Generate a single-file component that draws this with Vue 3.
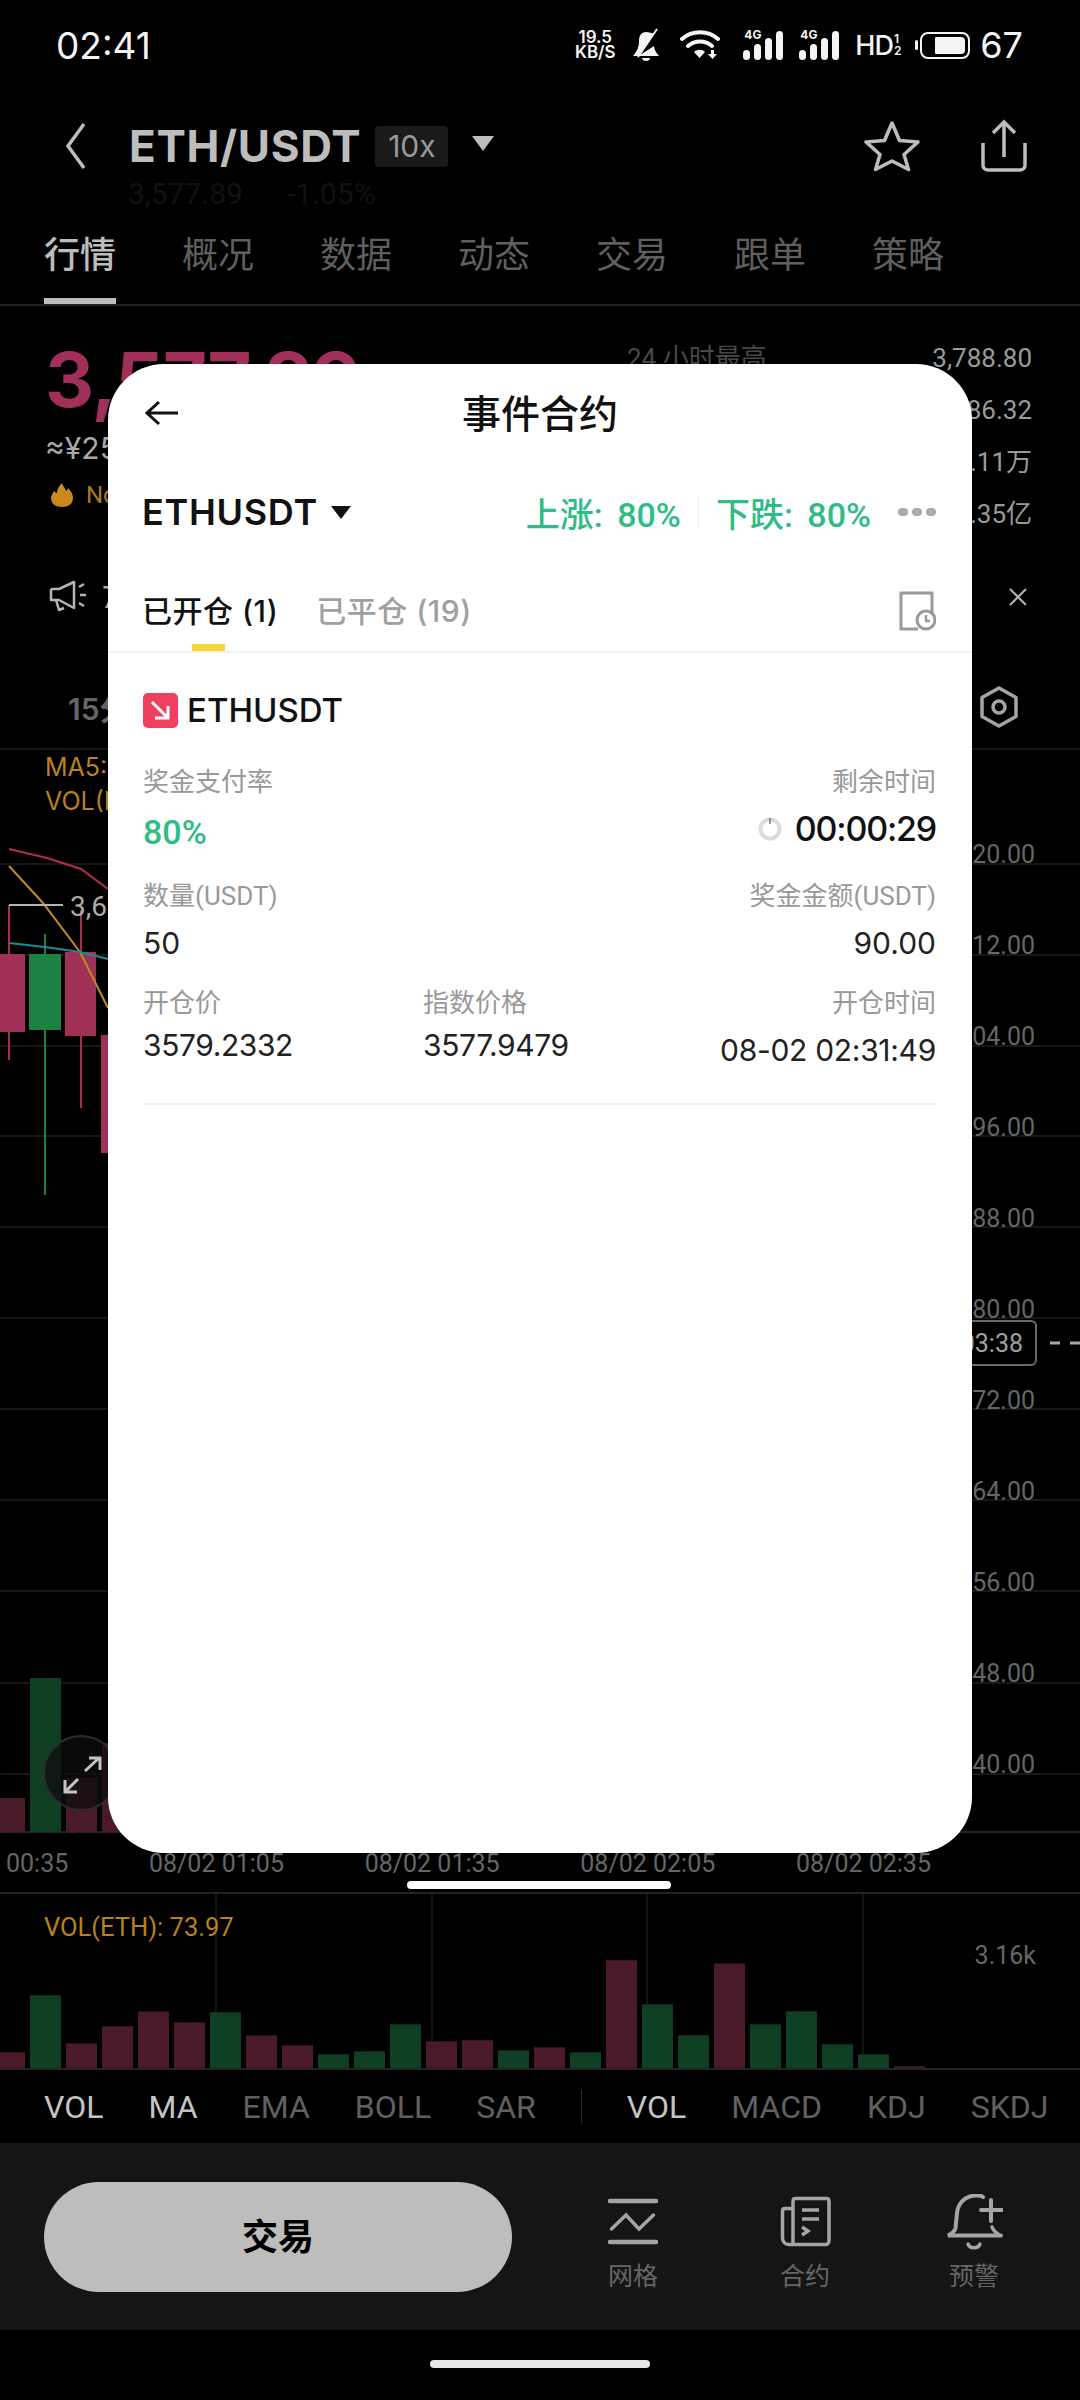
<template>
  <div class="page">
    <div class="status">
      <span class="clock">02:41</span>
      <div class="status-right">
        <div class="speed"><span>19.5</span><span>KB/S</span></div>
        <svg class="st-bell" viewBox="0 0 28 34" width="28" height="34">
          <path d="M14 4c-5 0-7 4-7 9 0 5-1 9-6 15h26c-3-3-5-7-5-10L8 27 22 6c-2-1-5-2-8-2z" fill="#f4f4f4" />
          <path d="M10 30h8c0 2-2 3-4 3s-4-1-4-3z" fill="#f4f4f4" />
          <path d="M6 29 25 1" stroke="#f4f4f4" stroke-width="2" />
        </svg>
        <svg class="st-wifi" viewBox="0 0 40 30" width="40" height="30">
          <path d="M2 9c10-9 26-9 36 0M8 16c7-6 17-6 24 0" fill="none" stroke="#f4f4f4" stroke-width="4" stroke-linecap="round" />
          <path d="M14 22c3-3 8-3 11 0l-5.500 6z" fill="#f4f4f4" />
          <path d="M31 20h3v4h3l-4.500 5-4.500-5h3z" fill="#f4f4f4" />
        </svg>
        <div v-for="n in 2" :key="n" class="signal">
          <span class="tag-4g">4G</span>
          <i class="sb sb1"></i><i class="sb sb2"></i><i class="sb sb3"></i><i class="sb sb4"></i>
        </div>
        <div class="hd"><span class="hd-main">HD</span><span class="hd-sub"><b>1</b><b>2</b></span></div>
        <div class="battery"><i class="bat-tip"></i><div class="bat-body"><i class="bat-fill"></i></div></div>
        <span class="bat-num">67</span>
      </div>
    </div>

    <div class="header">
      <svg class="back" viewBox="0 0 24 48" width="24" height="48">
        <path d="M20 2 4 24l16 22" fill="none" stroke="#bdbdbd" stroke-width="3.500" />
      </svg>
      <span class="pair">ETH/USDT</span>
      <span class="lev">10x</span>
      <i class="caret"></i>
      <div class="header-icons">
        <svg viewBox="0 0 56 52" width="56" height="52">
          <path d="M28 3l7.500 17.500 18.500 1.500-14 12.500 4.500 15L28 41 11.500 49.500l4.500-15L2 22l18.500-1.500z" fill="none" stroke="#bdbdbd" stroke-width="3.500" stroke-linejoin="round" />
        </svg>
        <svg viewBox="0 0 48 54" width="48" height="54">
          <path d="M3 24v22c0 3 2 5 5 5h32c3 0 5-2 5-5V24M24 38V4M13 14 24 3l11 11" fill="none" stroke="#bdbdbd" stroke-width="3.500" />
        </svg>
      </div>
    </div>

    <div class="sub-price"><span>3,577.89</span><span>-1.05%</span></div>

    <div class="tabs">
      <span v-for="(t, i) in mainTabs" :key="t" :class="['tab', { on: i === 0 }]">{{ t }}</span>
    </div>

    <div class="ticker">
      <div class="ticker-left">
        <div class="big-price">3,577.89</div>
        <div class="cny">≈¥25,719.24</div>
        <div class="rank">
          <svg viewBox="0 0 22 26" width="22" height="26">
            <path d="M11 1c1 4 3 4 4 8 1-1 2-2 2-3 3 3 5 6 5 10 0 6-5 9-11 9S0 22 0 16c0-3 2-5 3-7 1 1 2 2 3 2 0-4 2-7 5-10z" fill="#c98a1b" />
          </svg>
          <span>No.1</span>
        </div>
      </div>
      <div class="ticker-right">
        <div v-for="s in stats" :key="s.k" class="stat"><span>{{ s.k }}</span><b>{{ s.v }}</b></div>
      </div>
    </div>

    <div class="notice">
      <svg viewBox="0 0 38 34" width="38" height="34">
        <path d="M2 9h8L25 2v26L10 20l-3 0 3 10 5-2M2 9v11h8" fill="none" stroke="#b5b5b5" stroke-width="2.500" stroke-linejoin="round" />
        <path d="M30 7l5-3M31 15h6M30 23l5 3" stroke="#b5b5b5" stroke-width="2.500" />
      </svg>
      <span class="notice-text">7</span>
      <svg class="notice-x" viewBox="0 0 20 20" width="20" height="20">
        <path d="M2 2l16 16M18 2 2 18" stroke="#b5b5b5" stroke-width="2" />
      </svg>
    </div>

    <div class="periods">
      <span>15分</span>
      <svg viewBox="0 0 38 42" width="38" height="42">
        <path d="M19 2 36 11.500v19L19 40 2 30.500v-19z" fill="none" stroke="#a5a5a5" stroke-width="3.500" stroke-linejoin="round" />
        <circle cx="19" cy="21" r="6" fill="none" stroke="#a5a5a5" stroke-width="3.500" />
      </svg>
    </div>

    <div class="chart">
      <div class="ma-legend">
        <div>MA5: 3,592.11</div>
        <div>VOL(ETH): 73.97</div>
      </div>
      <svg class="chart-svg" viewBox="0 0 1080 1144" width="1080" height="1144">
        <line v-for="y in gridY" :key="y" x1="0" x2="1080" :y1="y" :y2="y" stroke="#171717" stroke-width="2" />
        <line x1="0" x2="1080" y1="1082" y2="1082" stroke="#242424" stroke-width="2" />
        <line x1="0" x2="1080" y1="1143" y2="1143" stroke="#242424" stroke-width="2" />

        <rect v-for="b in mainBars" :key="b.x" :x="b.x" :y="b.y" width="31" :height="1082 - b.y" :fill="b.c" />

        <line x1="9" x2="9" y1="155" y2="310" stroke="#a03055" stroke-width="2" />
        <line x1="45" x2="45" y1="184" y2="445" stroke="#1f8043" stroke-width="2" />
        <line x1="81" x2="81" y1="160" y2="358" stroke="#a03055" stroke-width="2" />
        <rect x="-6" y="204" width="31" height="78" fill="#a03055" />
        <rect x="29" y="204" width="32" height="76" fill="#1f8043" />
        <rect x="65" y="202" width="31" height="84" fill="#a03055" />
        <rect x="101" y="285" width="31" height="118" fill="#a03055" />

        <polyline points="9,99 47,108 81,119 108,139" fill="none" stroke="#b02a62" stroke-width="2" />
        <polyline points="9,116 43,153 80,202 108,258" fill="none" stroke="#c08a25" stroke-width="2" />
        <polyline points="9,193 45,197 80,202 108,209" fill="none" stroke="#1d8a96" stroke-width="2" />
        <line x1="9" x2="63" y1="155" y2="155" stroke="#b5b5b5" stroke-width="2" />
        <text x="70" y="166" class="hi-label">3,612.48</text>

        <text v-for="a in axis" :key="a.t" x="1035" :y="a.y" text-anchor="end" class="axis">{{ a.t }}</text>

        <path d="M1030 593h5M1050 593h10M1070 593h10" stroke="#a8a8a8" stroke-width="3" />
        <rect x="900" y="571" width="136" height="44" rx="5" fill="#000" stroke="#6a6a6a" stroke-width="2" />
        <text x="1023" y="602" text-anchor="end" class="tag">03:38</text>

        <circle cx="81" cy="1023" r="37" fill="#0d0d0d" fill-opacity="0.75" stroke="#2c2c2c" stroke-width="2" />
        <path d="M85 1021l14-13M89 1008h11v12M65 1042l13-13M65 1030v12h12" fill="none" stroke="#c4c4c4" stroke-width="3" />
      </svg>
      <div class="time-axis">
        <span v-for="t in times" :key="t">{{ t }}</span>
      </div>
    </div>

    <div class="vol">
      <div class="vol-legend">VOL(ETH): 73.97</div>
      <div class="vol-max">3.16k</div>
      <svg viewBox="0 0 1080 176" width="1080" height="176">
        <line v-for="x in [216, 432, 647, 863]" :key="x" :x1="x" :x2="x" y1="0" y2="175" stroke="#131313" stroke-width="2" />
        <rect v-for="b in volBars" :key="b.x" :x="b.x" :y="b.y" width="31" :height="175 - b.y" :fill="b.c" />
        <line x1="0" x2="1080" y1="175" y2="175" stroke="#242424" stroke-width="2" />
      </svg>
    </div>

    <div class="indicators">
      <span v-for="a in indicatorsA" :key="a.t" :class="{ on: a.on }">{{ a.t }}</span>
      <i class="ind-div"></i>
      <span v-for="a in indicatorsB" :key="a.t" :class="{ on: a.on }">{{ a.t }}</span>
    </div>

    <div class="bottom-bar">
      <div class="trade-btn">交易</div>
      <div class="action">
        <svg viewBox="0 0 58 60" width="58" height="60">
          <g transform="translate(4 3)" fill="none" stroke="#a5a5a5" stroke-linecap="round">
            <path d="M2 4h46M2 45h46" stroke-width="4.500" />
            <path d="M3.500 32 18 18l13 14 14.500-14" stroke-width="3.500" />
          </g>
        </svg>
        <span>网格</span>
      </div>
      <div class="action">
        <svg viewBox="0 0 58 60" width="58" height="60">
          <g transform="translate(5 3)" fill="none" stroke="#a5a5a5" stroke-width="3.500">
            <path d="M12 46V4c0-1.500 1-2.500 2.500-2.500h31c1.500 0 2.500 1 2.500 2.500v40c0 2-1.500 3.500-3.500 3.500H8c-4 0-6.500-3-6.500-6.500V14c0-1.500 1-2.500 2.500-2.500h8" />
            <path d="M21 13h17M21 22h17M21 30l6 4-6 4" />
          </g>
        </svg>
        <span>合约</span>
      </div>
      <div class="action">
        <svg viewBox="0 0 58 60" width="58" height="60">
          <g transform="translate(1 0)" fill="none" stroke="#a5a5a5" stroke-linecap="round">
            <path d="M37 3C35 1.500 33 1.500 31 1.500 18 1.500 12 10 11 19L9.500 34C9 37 5 40 2 41.500H55" stroke-width="4" />
            <path d="M46 33c1 3 3 5 6 7" stroke-width="3.500" />
            <path d="M35 16h21M45 6v21" stroke-width="4" />
            <path d="M22 50c2 5 10 5 12 0" stroke-width="3.500" />
          </g>
        </svg>
        <span>预警</span>
      </div>
    </div>

    <div class="home"><i></i></div>

    <!-- dialog over the dimmed page -->
    <div class="dialog">
      <div class="dlg-head">
        <svg class="dlg-back" viewBox="0 0 34 26" width="34" height="26">
          <path d="M33 13H3M14 2 2 13l12 11" fill="none" stroke="#111" stroke-width="3" />
        </svg>
        <span class="dlg-title">事件合约</span>
      </div>

      <div class="dlg-symbol">
        <span class="sym">ETHUSDT</span>
        <i class="sym-caret"></i>
        <div class="rates">
          <span>上涨: 80%</span>
          <i class="rate-div"></i>
          <span>下跌: 80%</span>
          <div class="dots"><i></i><i></i><i></i></div>
        </div>
      </div>

      <div class="dlg-tabs">
        <span class="dlg-tab on">已开仓 (1)</span>
        <span class="dlg-tab">已平仓 (19)</span>
        <svg class="dlg-hist" viewBox="0 0 38 40" width="38" height="40">
          <path d="M20 38H3V2h31v20" fill="none" stroke="#9a9a9a" stroke-width="3" />
          <circle cx="28" cy="29" r="9" fill="#fff" stroke="#9a9a9a" stroke-width="3" />
          <path d="M28 24v6h4" fill="none" stroke="#9a9a9a" stroke-width="2.500" />
        </svg>
      </div>

      <div class="order">
        <div class="order-title">
          <svg viewBox="0 0 35 35" width="35" height="35">
            <rect width="35" height="35" rx="5" fill="#f0405f" />
            <path d="M9 9l16 16M25 13v12H12" fill="none" stroke="#fff" stroke-width="3" />
          </svg>
          <span>ETHUSDT</span>
        </div>

        <div class="row row-a">
          <div class="cell"><label>奖金支付率</label><b class="rate">80%</b></div>
          <div class="cell end">
            <label>剩余时间</label>
            <div class="remain">
              <svg viewBox="0 0 24 24" width="24" height="24">
                <circle cx="12" cy="12" r="9.500" fill="none" stroke="#dcdcdc" stroke-width="4" />
                <path d="M12 1v6" stroke="#777" stroke-width="1.500" />
              </svg>
              <b>00:00:29</b>
            </div>
          </div>
        </div>

        <div class="row row-b">
          <div class="cell"><label>数量(USDT)</label><span class="val">50</span></div>
          <div class="cell end"><label>奖金金额(USDT)</label><span class="val">90.00</span></div>
        </div>

        <div class="row row-c">
          <div class="cell w-open"><label>开仓价</label><span class="val tight">3579.2332</span></div>
          <div class="cell w-index"><label>指数价格</label><span class="val tight">3577.9479</span></div>
          <div class="cell end grow"><label>开仓时间</label><span class="val low">08-02 02:31:49</span></div>
        </div>
      </div>
    </div>
    <i class="dlg-home"></i>
  </div>
</template>

<script setup>
const mainTabs = ['行情', '概况', '数据', '动态', '交易', '跟单', '策略']

const stats = [
  { k: '24 小时最高', v: '3,788.80' },
  { k: '24 小时最低', v: '3,486.32' },
  { k: '24 小时量(ETH)', v: '41.11万' },
  { k: '24 小时额(USDT)', v: '15.35亿' }
]

const gridY = [114, 205, 296, 386, 477, 568, 659, 750, 841, 933, 1024]

const axisLabels = ['3,620.00', '3,612.00', '3,604.00', '3,596.00', '3,588.00', '3,580.00', '3,572.00', '3,564.00', '3,556.00', '3,548.00', '3,540.00']
const axis = axisLabels.map((t, i) => ({ t, y: 113 + i * 91 }))

const RED = '#4a1a28'
const GREEN = '#0f3f22'

const mainBars = [
  { x: -6, y: 1048, c: RED },
  { x: 30, y: 928, c: GREEN },
  { x: 66, y: 1028, c: RED },
  { x: 102, y: 993, c: RED }
]

const times = ['00:35', '08/02 01:05', '08/02 01:35', '08/02 02:05', '08/02 02:35']

const volTops = [1176, 1005, 1149, 1098, 1053, 1086, 1056, 1125, 1155, 1182, 1173, 1092, 1143, 1140, 1170, 1161, 1176, 900, 1032, 1125, 909, 1092, 1053, 1152, 1182, 1218]
const volColors = 'rgrrrrgrrgggrrgrgrggrgggg'
const volBars = volTops.map((t, i) => ({
  x: -6 + i * 36,
  y: 175 - (1226 - t) / 3,
  c: i === 25 || volColors[i] === 'r' ? RED : GREEN
}))

const indicatorsA = [
  { t: 'VOL', on: true },
  { t: 'MA', on: true },
  { t: 'EMA' },
  { t: 'BOLL' },
  { t: 'SAR' }
]
const indicatorsB = [
  { t: 'VOL', on: true },
  { t: 'MACD' },
  { t: 'KDJ' },
  { t: 'SKDJ' }
]
</script>

<style>
html, body {
  margin: 0;
  background: #000;
}
</style>

<style scoped>
.page {
  position: relative;
  width: 1080px;
  height: 2400px;
  overflow: hidden;
  background: #000;
  font-family: Inter, "Noto Sans CJK SC", sans-serif;
  color: #bdbdbd;
}
i { display: block; font-style: normal; }

.status {
  height: 90px;
  display: flex;
  align-items: center;
  justify-content: space-between;
  padding: 0 57px 0 56px;
  color: #f4f4f4;
}
.clock { font-size: 37px; font-weight: 400; }
.status-right { display: flex; align-items: center; }
.speed {
  display: flex;
  flex-direction: column;
  align-items: center;
  width: 44px;
  font-size: 17px;
  line-height: 15px;
  font-weight: 600;
}
.st-bell { margin-left: 15px; }
.st-wifi { margin-left: 20px; }
.signal {
  position: relative;
  width: 40px;
  height: 30px;
  margin-left: 23px;
  display: flex;
  align-items: flex-end;
  gap: 4px;
}
.signal + .signal { margin-left: 16px; }
.tag-4g {
  position: absolute;
  left: 1px;
  top: -2px;
  font-size: 12px;
  font-weight: 700;
  line-height: 14px;
}
.sb { width: 7px; background: #f4f4f4; border-radius: 4px; }
.sb1 { height: 10px; }
.sb2 { height: 16px; }
.sb3 { height: 22px; }
.sb4 { height: 29px; }
.hd { display: flex; align-items: center; margin-left: 16px; width: 45px; }
.hd-main { font-size: 27px; font-weight: 500; letter-spacing: -1px; }
.hd-sub { display: flex; flex-direction: column; font-size: 12px; line-height: 12px; margin-left: 1px; }
.hd-sub b { font-weight: 600; }
.battery { display: flex; align-items: center; margin-left: 15px; }
.bat-tip { width: 3px; height: 10px; background: #f4f4f4; border-radius: 2px; margin-right: 2px; }
.bat-body {
  box-sizing: border-box;
  width: 50px;
  height: 27px;
  border: 2px solid #f4f4f4;
  border-radius: 8px;
  padding: 3px;
  display: flex;
  justify-content: flex-end;
}
.bat-fill { width: 30px; background: #f4f4f4; border-radius: 1px 4px 4px 1px; }
.bat-num { font-size: 36px; margin-left: 10px; font-weight: 400; }

.header {
  height: 76px;
  margin-top: 18px;
  display: flex;
  align-items: center;
  padding-left: 64px;
  padding-right: 52px;
}
.pair { font-size: 44px; font-weight: 700; margin-left: 41px; color: #bdbdbd; letter-spacing: 0.7px; }
.lev {
  width: 73px;
  height: 41px;
  margin-left: 14px;
  border-radius: 4px;
  background: #1a1a1a;
  color: #999;
  font-size: 30px;
  line-height: 41px;
  text-align: center;
}
.caret {
  width: 0;
  height: 0;
  margin-left: 24px;
  margin-bottom: 6px;
  border-left: 11px solid transparent;
  border-right: 11px solid transparent;
  border-top: 15px solid #bdbdbd;
}
.header-icons { margin-left: auto; display: flex; align-items: center; gap: 60px; }

.sub-price {
  height: 30px;
  margin-top: -5px;
  padding-left: 128px;
  display: flex;
  gap: 44px;
  font-family: Roboto, sans-serif;
  font-size: 30px;
  line-height: 30px;
  color: #111;
}

.tabs {
  height: 78px;
  margin-top: 19px;
  padding: 1px 0 0 44px;
  box-sizing: border-box;
  display: flex;
  gap: 66px;
  border-bottom: 2px solid #222;
}
.tab {
  position: relative;
  width: 72px;
  font-size: 36px;
  line-height: 52px;
  color: #5f5f5f;
}
.tab.on { color: #bdbdbd; font-weight: 500; }
.tab.on::after {
  content: "";
  position: absolute;
  left: 0;
  right: 0;
  bottom: 0;
  height: 6px;
  background: #bdbdbd;
}

.ticker {
  height: 241px;
  display: flex;
  justify-content: space-between;
  padding: 35px 48px 0 45px;
  box-sizing: border-box;
}
.big-price { font-size: 76px; line-height: 76px; font-weight: 700; color: #a0305a; letter-spacing: -1px; }
.cny { font-size: 30px; line-height: 36px; margin-top: 13px; color: #a8a8a8; }
.rank {
  display: flex;
  align-items: center;
  gap: 13px;
  margin-top: 15px;
  padding-left: 6px;
  font-family: Roboto, "Noto Sans CJK SC", sans-serif;
  font-size: 24px;
  color: #a87a1c;
}
.ticker-right { width: 405px; margin-top: 2px; }
.stat {
  display: flex;
  justify-content: space-between;
  height: 52px;
  font-family: Roboto, "Noto Sans CJK SC", sans-serif;
  font-size: 26px;
  line-height: 30px;
  color: #484848;
}
.stat b { font-weight: 400; color: #9a9a9a; }

.notice {
  height: 100px;
  display: flex;
  align-items: center;
  padding: 0 52px 0 49px;
}
.notice-text { margin-left: 15px; font-size: 30px; color: #aaa; }
.notice-x { margin-left: auto; }

.periods {
  height: 103px;
  display: flex;
  align-items: center;
  justify-content: space-between;
  padding: 18px 62px 0 68px;
  font-size: 30px;
  font-weight: 600;
  color: #666;
  border-bottom: 2px solid #171717;
  box-sizing: border-box;
}

.chart { position: relative; height: 1144px; }
.ma-legend {
  position: absolute;
  left: 45px;
  top: 0;
  font-size: 25px;
  line-height: 34px;
  color: #b8821f;
}
.chart-svg { display: block; }
.hi-label { font: 28px Roboto, sans-serif; fill: #aaa; }
.axis { font: 25px Roboto, sans-serif; fill: #666; }
.tag { font: 25px Roboto, sans-serif; fill: #a0a0a0; }
.time-axis {
  position: absolute;
  left: 6px;
  top: 1098px;
  width: 925px;
  display: flex;
  justify-content: space-between;
  font-family: Roboto, sans-serif;
  font-size: 25px;
  line-height: 32px;
  color: #666;
}

.vol { position: relative; height: 176px; }
.vol svg { display: block; }
.vol-legend {
  position: absolute;
  left: 44px;
  top: 17px;
  font-family: Roboto, sans-serif;
  font-size: 25.5px;
  line-height: 32px;
  color: #b8821f;
}
.vol-max {
  position: absolute;
  right: 44px;
  top: 46px;
  font-family: Roboto, sans-serif;
  font-size: 25px;
  line-height: 32px;
  color: #666;
}

.indicators {
  height: 73px;
  display: flex;
  align-items: center;
  padding-left: 44px;
  font-family: Roboto, sans-serif;
  font-size: 32px;
  color: #606060;
  gap: 45px;
}
.indicators span.on { color: #c4c4c4; }
.ind-div { width: 1px; height: 34px; background: #2a2a2a; }

.bottom-bar {
  height: 187px;
  background: #151515;
  display: flex;
  align-items: center;
  padding-left: 44px;
  box-sizing: border-box;
}
.trade-btn {
  flex: none;
  width: 468px;
  height: 110px;
  border-radius: 55px;
  background: #bdbdbd;
  color: #000;
  font-size: 36px;
  font-weight: 700;
  line-height: 110px;
  text-align: center;
  margin-right: 35px;
}
.action {
  flex: none;
  width: 172px;
  align-self: flex-start;
  padding-top: 51px;
  display: flex;
  flex-direction: column;
  align-items: center;
  gap: 7px;
  font-size: 25px;
  line-height: 30px;
  color: #666;
}
.action:last-child { margin-left: -3px; }
.action svg { display: block; }

.home { height: 70px; display: flex; justify-content: center; padding-top: 30px; box-sizing: border-box; }
.home i { width: 220px; height: 8px; border-radius: 4px; background: #e8e8e8; }

.dialog {
  position: absolute;
  left: 108px;
  top: 364px;
  width: 864px;
  height: 1489px;
  background: #fff;
  border-radius: 56px;
  color: #111;
}
.dlg-home {
  position: absolute;
  left: 407px;
  top: 1881px;
  width: 264px;
  height: 8px;
  border-radius: 4px;
  background: #fff;
}
.dlg-head {
  position: relative;
  height: 96px;
  display: flex;
  align-items: center;
  justify-content: center;
}
.dlg-back { position: absolute; left: 37px; top: 36px; }
.dlg-title { font-size: 39px; font-weight: 500; margin-bottom: 2px; }
.dlg-symbol {
  height: 90px;
  margin-top: 7px;
  margin-bottom: 1px;
  display: flex;
  align-items: center;
  padding: 0 36px 0 34px;
}
.sym { font-size: 36px; font-weight: 600; letter-spacing: 0.7px; }
.sym-caret {
  width: 0;
  height: 0;
  margin-left: 13px;
  border-left: 10px solid transparent;
  border-right: 10px solid transparent;
  border-top: 13px solid #111;
}
.rates {
  margin-left: auto;
  display: flex;
  align-items: center;
  font-family: Roboto, "Noto Sans CJK SC", sans-serif;
  font-size: 34px;
  word-spacing: 6px;
  font-weight: 500;
  color: #2ebd85;
}
.rate-div { width: 1px; height: 30px; background: #eee; margin: 0 17px; }
.dots { display: flex; gap: 4px; margin-left: 27px; }
.dots i { width: 10px; height: 8px; border-radius: 4px; background: #aaa; }
.dlg-tabs {
  position: relative;
  height: 95px;
  display: flex;
  align-items: center;
  gap: 38px;
  padding: 9px 36px 0 34px;
  box-sizing: border-box;
  border-bottom: 2px solid #f2f2f2;
}
.dlg-tab { font-size: 30px; font-weight: 500; color: #a0a0a0; letter-spacing: 0.5px; }
.dlg-tab.on { color: #111; }
.dlg-tab.on::after {
  content: "";
  position: absolute;
  left: 84px;
  bottom: 0;
  width: 33px;
  height: 7px;
  background: #fcd535;
}
.dlg-hist { margin-left: auto; margin-top: 4px; }

.order {
  margin: 0 36px 0 35px;
  padding-top: 37px;
  height: 452px;
  box-sizing: border-box;
  border-bottom: 2px solid #f2f2f2;
}
.order-title { display: flex; align-items: center; gap: 9px; font-size: 33px; font-weight: 500; }
.order-title svg { display: block; }
.row { display: flex; justify-content: space-between; }
.row-a { margin-top: 37px; }
.row-b { margin-top: 29px; }
.row-c { margin-top: 27px; justify-content: flex-start; }
.cell { display: flex; flex-direction: column; }
.cell.end { align-items: flex-end; }
.cell.grow { flex: 1; }
.w-open { width: 280px; }
.w-index { width: 200px; }
.cell label {
  font-family: Roboto, "Noto Sans CJK SC", sans-serif;
  font-size: 26px;
  line-height: 30px;
  color: #999;
}
.rate {
  font-family: Roboto, sans-serif;
  font-size: 34px;
  line-height: 40px;
  margin-top: 15px;
  font-weight: 500;
  color: #2ebd85;
}
.remain { display: flex; align-items: center; gap: 13px; margin-top: 12px; }
.remain svg { display: block; }
.remain b { font-size: 34px; line-height: 40px; font-weight: 500; color: #111; letter-spacing: -1.2px; }
.val { font-size: 30px; line-height: 36px; margin-top: 14px; color: #222; }
.val.tight { margin-top: 9px; letter-spacing: -0.4px; }
.val.low { margin-top: 14px; letter-spacing: -0.3px; }
</style>
